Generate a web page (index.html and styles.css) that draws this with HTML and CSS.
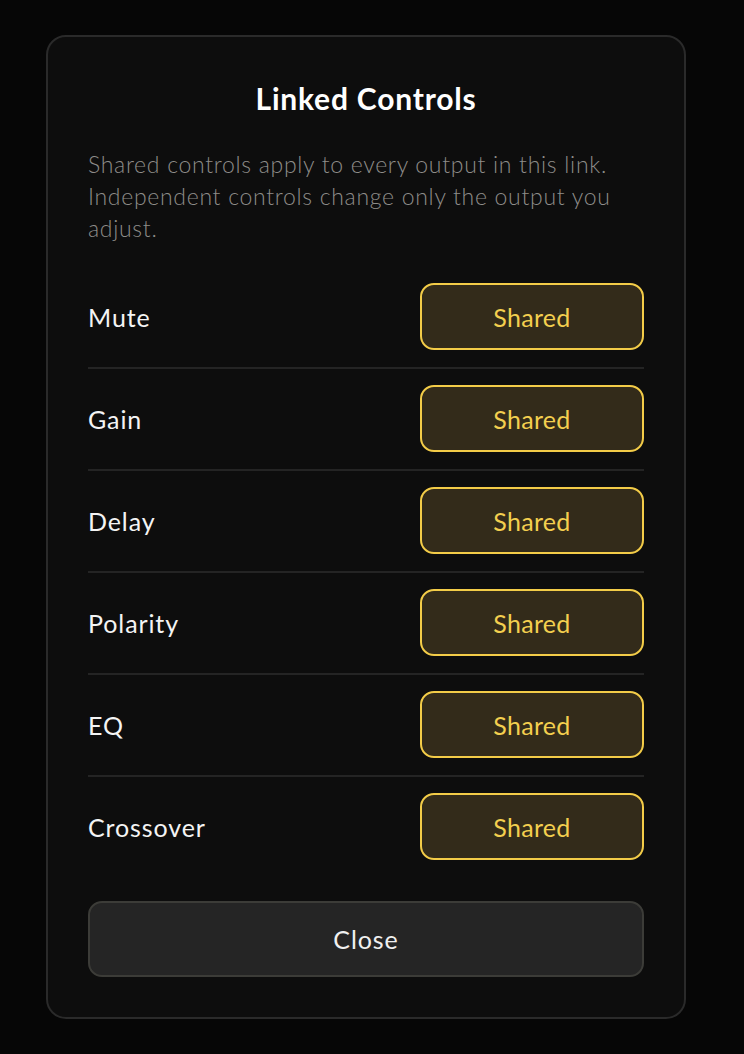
FILE: index.html
```html
<!DOCTYPE html>
<html lang="en">
<head>
<meta charset="utf-8">
<title>Linked Controls</title>
<link rel="stylesheet" href="styles.css">
</head>
<body>
<div class="card">
  <h1 class="title">Linked Controls</h1>
  <p class="desc">Shared controls apply to every output in this link. Independent controls change only the output you adjust.</p>
  <div class="rows">
    <div class="row"><span class="label">Mute</span><button class="chip">Shared</button></div>
    <div class="row"><span class="label">Gain</span><button class="chip">Shared</button></div>
    <div class="row"><span class="label">Delay</span><button class="chip">Shared</button></div>
    <div class="row"><span class="label">Polarity</span><button class="chip">Shared</button></div>
    <div class="row"><span class="label">EQ</span><button class="chip">Shared</button></div>
    <div class="row"><span class="label">Crossover</span><button class="chip">Shared</button></div>
  </div>
  <button class="close">Close</button>
</div>
</body>
</html>
```
FILE: styles.css
```css
* { box-sizing: border-box; }
html, body { margin: 0; padding: 0; }
body {
  background: #060606;
  font-family: Lato, "Noto Sans", sans-serif;
  width: 744px;
  height: 1054px;
  overflow: hidden;
  padding-top: 35px;
  padding-left: 46px;
}
.card {
  width: 640px;
  background: #0d0d0d;
  border: 2px solid #2a2a2a;
  border-radius: 20px;
  padding: 44px 40px 40px;
  display: flex;
  flex-direction: column;
}
.title {
  margin: 0;
  font-size: 30px;
  line-height: 34px;
  font-weight: 700;
  letter-spacing: 0.8px;
  color: #ffffff;
  text-align: center;
}
.desc {
  margin: 33px 0 0;
  font-size: 23px;
  line-height: 32px;
  font-weight: 300;
  letter-spacing: 0.7px;
  color: #8d8c89;
}
.rows {
  margin-top: 23px;
  display: flex;
  flex-direction: column;
}
.row {
  display: flex;
  align-items: center;
  justify-content: space-between;
  padding: 16px 0 17px;
  border-bottom: 2px solid #242424;
}
.row:last-child { border-bottom: none; }
.label {
  font-size: 25px;
  letter-spacing: 0.9px;
  color: #f4f4f4;
}
.chip {
  width: 224px;
  height: 67px;
  border: 2px solid #f3cc48;
  background: #332b1a;
  border-radius: 14px;
  color: #f3cf4f;
  font-family: inherit;
  font-size: 25px;
  letter-spacing: 0.3px;
  padding: 0;
}
.close {
  margin-top: 24px;
  width: 100%;
  height: 76px;
  background: #252525;
  border: 2px solid #3c3c38;
  border-radius: 14px;
  color: #f0f0f0;
  font-family: inherit;
  font-size: 25px;
  letter-spacing: 0.9px;
  padding: 0;
}
```
